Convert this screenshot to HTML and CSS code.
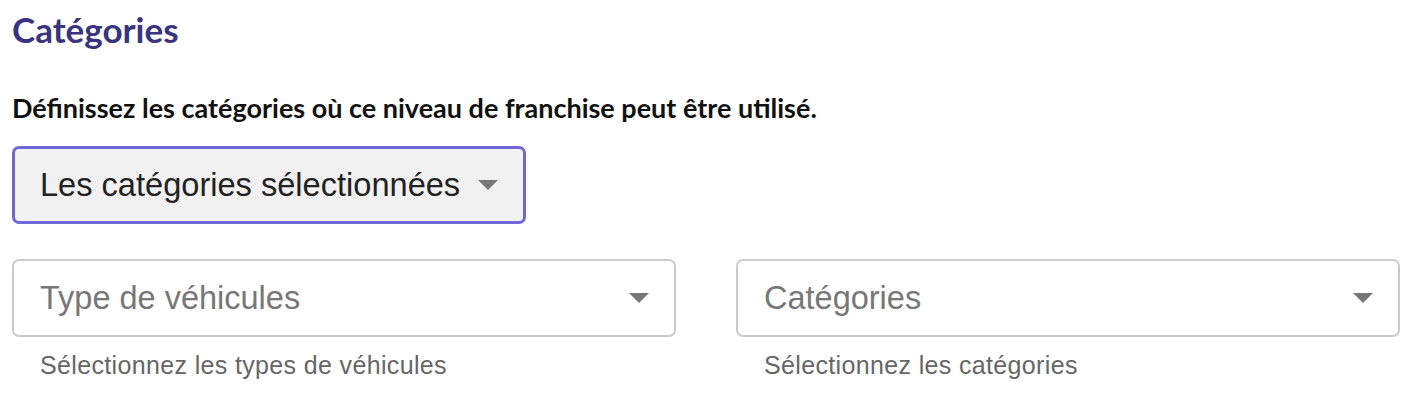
FILE: index.html
```html
<!DOCTYPE html>
<html lang="fr">
<head>
<meta charset="utf-8">
<title>Catégories</title>
<link rel="stylesheet" href="styles.css">
</head>
<body>
<section class="panel">
  <h2 class="title">Catégories</h2>
  <p class="lead">Définissez les catégories où ce niveau de franchise peut être utilisé.</p>
  <button class="mode-select" type="button">
    <span>Les catégories sélectionnées</span>
    <span class="caret"></span>
  </button>
  <div class="fields">
    <div class="field">
      <div class="select">
        <span class="placeholder">Type de véhicules</span>
        <span class="caret"></span>
      </div>
      <div class="help">Sélectionnez les types de véhicules</div>
    </div>
    <div class="field">
      <div class="select">
        <span class="placeholder">Catégories</span>
        <span class="caret"></span>
      </div>
      <div class="help">Sélectionnez les catégories</div>
    </div>
  </div>
</section>
</body>
</html>
```

FILE: styles.css
```css
* { box-sizing: border-box; }
html, body { margin: 0; padding: 0; background: #fff; }
body { font-family: "Liberation Sans", Arial, sans-serif; }

.panel {
  padding: 9px 20px 0 12px;
  width: 1420px;
}

.title {
  margin: 0;
  font-family: Lato, "Open Sans", sans-serif;
  font-weight: 700;
  font-size: 35px;
  line-height: 40px;
  color: #3a3480;
}

.lead {
  margin: 43px 0 0;
  font-family: Lato, "Open Sans", sans-serif;
  font-weight: 700;
  font-size: 27px;
  line-height: 32px;
  color: #111;
}

.mode-select {
  margin-top: 22px;
  display: flex;
  align-items: center;
  gap: 18px;
  height: 78px;
  padding: 0 25px 0 25px;
  background: #f1f1f1;
  border: 3px solid #6f66d8;
  border-radius: 7px;
  font-family: "Liberation Sans", Arial, sans-serif;
  font-size: 32.6px;
  color: #222;
}

.caret {
  width: 0;
  height: 0;
  border-left: 10px solid transparent;
  border-right: 10px solid transparent;
  border-top: 10px solid #777;
}

.fields {
  margin-top: 35px;
  display: grid;
  grid-template-columns: 664px 664px;
  column-gap: 60px;
}

.select {
  height: 78px;
  border: 2px solid #cbcbcb;
  border-radius: 7px;
  display: flex;
  align-items: center;
  justify-content: space-between;
  padding: 0 25px 0 26px;
}

.placeholder {
  font-size: 32.5px;
  color: #777;
}

.help {
  margin-top: 13px;
  padding-left: 28px;
  font-size: 25px;
  line-height: 30px;
  letter-spacing: 0.35px;
  color: #666;
}
```
